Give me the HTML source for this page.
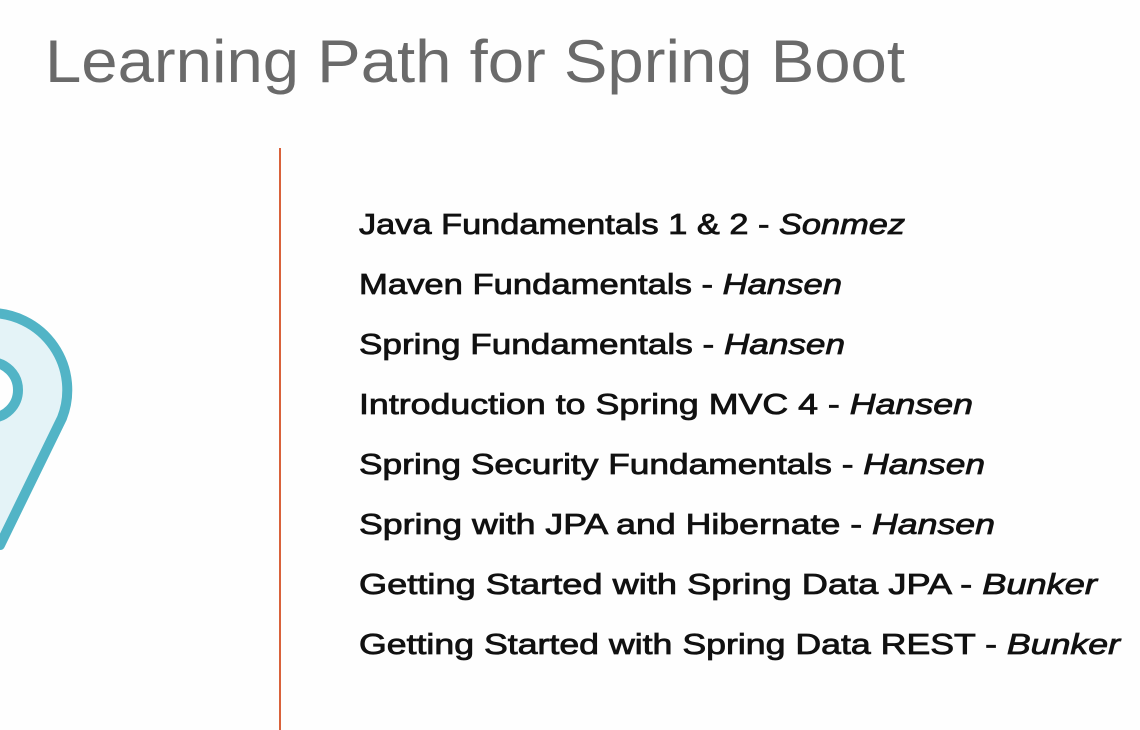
<!DOCTYPE html>
<html><head><style>
html,body{margin:0;padding:0;background:#fefefe;width:1140px;height:730px;overflow:hidden}
svg{display:block}
</style></head><body>
<svg width="1140" height="730" xmlns="http://www.w3.org/2000/svg">
<rect width="1140" height="730" fill="#fefefe"/>
<text x="45" y="82" font-family="Liberation Sans, sans-serif" font-size="60" fill="#6a6a6a" textLength="860" lengthAdjust="spacingAndGlyphs">Learning Path for Spring Boot</text>
<line x1="280" y1="148" x2="280" y2="730" stroke="#d9623b" stroke-width="2"/>
<path d="M-10 313 A77 77 0 0 1 62 418 L0 545 L-40 545 Z" fill="#e4f3f7" stroke="#52b4c6" stroke-width="10" stroke-linejoin="round"/>
<circle cx="-10" cy="390" r="28" fill="#fefefe" stroke="#52b4c6" stroke-width="10"/>
<g font-family="Liberation Sans, sans-serif" font-size="29" fill="#111" stroke="#111" stroke-width="0.8">
<text x="359" y="234" textLength="546" lengthAdjust="spacingAndGlyphs">Java Fundamentals 1 &amp; 2 - <tspan font-style="italic">Sonmez</tspan></text>
<text x="359" y="294" textLength="483" lengthAdjust="spacingAndGlyphs">Maven Fundamentals - <tspan font-style="italic">Hansen</tspan></text>
<text x="359" y="354" textLength="486" lengthAdjust="spacingAndGlyphs">Spring Fundamentals - <tspan font-style="italic">Hansen</tspan></text>
<text x="359" y="414" textLength="614" lengthAdjust="spacingAndGlyphs">Introduction to Spring MVC 4 - <tspan font-style="italic">Hansen</tspan></text>
<text x="359" y="474" textLength="626" lengthAdjust="spacingAndGlyphs">Spring Security Fundamentals - <tspan font-style="italic">Hansen</tspan></text>
<text x="359" y="534" textLength="636" lengthAdjust="spacingAndGlyphs">Spring with JPA and Hibernate - <tspan font-style="italic">Hansen</tspan></text>
<text x="359" y="594" textLength="738" lengthAdjust="spacingAndGlyphs">Getting Started with Spring Data JPA - <tspan font-style="italic">Bunker</tspan></text>
<text x="359" y="654" textLength="761" lengthAdjust="spacingAndGlyphs">Getting Started with Spring Data REST - <tspan font-style="italic">Bunker</tspan></text>
</g>
</svg>
</body></html>
